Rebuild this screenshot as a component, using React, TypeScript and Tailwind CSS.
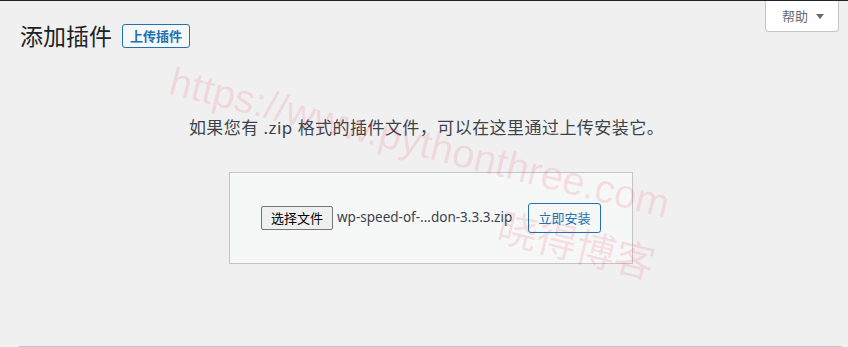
const font = "font-['Noto_Sans','Noto_Sans_CJK_SC',sans-serif]";

const HelpTab = () => (
  <button
    className={`absolute right-[9px] top-0 flex h-[31px] w-[74px] items-center gap-[8px] rounded-b-[4px] border border-t-0 border-[#c3c4c7] bg-white pl-[16px] text-[13px] leading-none text-[#646970] ${font}`}
  >
    <span>帮助</span>
    <svg width="8" height="5" viewBox="0 0 8 5" className="mt-[1px]">
      <path d="M0 0h8L4 5z" fill="#646970" />
    </svg>
  </button>
);

const Watermark = () => (
  <div
    className="pointer-events-none absolute left-[178px] top-[50px] origin-top-left rotate-[14deg] text-right font-['Liberation_Sans','Noto_Sans_CJK_SC',sans-serif] text-[40px] leading-[60px] text-[rgba(235,40,70,0.12)]"
  >
    <div>https://www.pythonthree.com</div>
    <div className="font-['Noto_Sans_CJK_SC',sans-serif]">晓得博客</div>
  </div>
);

export default function App() {
  return (
    <div className={`relative h-[347px] w-[848px] overflow-hidden border-t border-[#1d2327] bg-[#f0f0f1] ${font}`}>
      <HelpTab />

      <div className="flex items-center pl-[20px] pt-[20px]">
        <h1 className="text-[23px] font-normal leading-[30px] text-[#1d2327]">添加插件</h1>
        <button className="ml-[10px] h-[24px] rounded-[3px] border border-[#2271b1] bg-[#f6f7f7] px-[7px] text-[13px] font-semibold leading-none text-[#2271b1]">
          上传插件
        </button>
      </div>

      <p className="mt-[65px] pl-[5px] text-center text-[17px] leading-[24px] tracking-[0.45px] text-[#3c434a]">
        如果您有 .zip 格式的插件文件，可以在这里通过上传安装它。
      </p>

      <div className="mt-[32px] flex justify-center pl-[14px]">
        <form className="flex h-[92px] w-[404px] items-center border border-[#c3c4c7] bg-[#f6f7f7] pl-[31px] pr-[31px]">
          <div className="flex items-center">
            <span className="flex h-[24px] w-[72px] items-center justify-center rounded-[2px] border border-[#767676] bg-[#efefef] text-[13px] leading-none text-black">
              选择文件
            </span>
            <span className="ml-[4px] text-[13.5px] leading-none text-[#3c434a]">wp-speed-of-...don-3.3.3.zip</span>
          </div>
          <button
            type="button"
            className="ml-auto flex h-[30px] w-[73px] items-center justify-center rounded-[3px] border border-[#2271b1] bg-[#f6f7f7] text-[13px] leading-none text-[#2271b1]"
          >
            立即安装
          </button>
        </form>
      </div>

      <div className="absolute bottom-0 left-[19px] right-[6px] h-px bg-[#c3c4c7]" />

      <Watermark />
    </div>
  );
}
